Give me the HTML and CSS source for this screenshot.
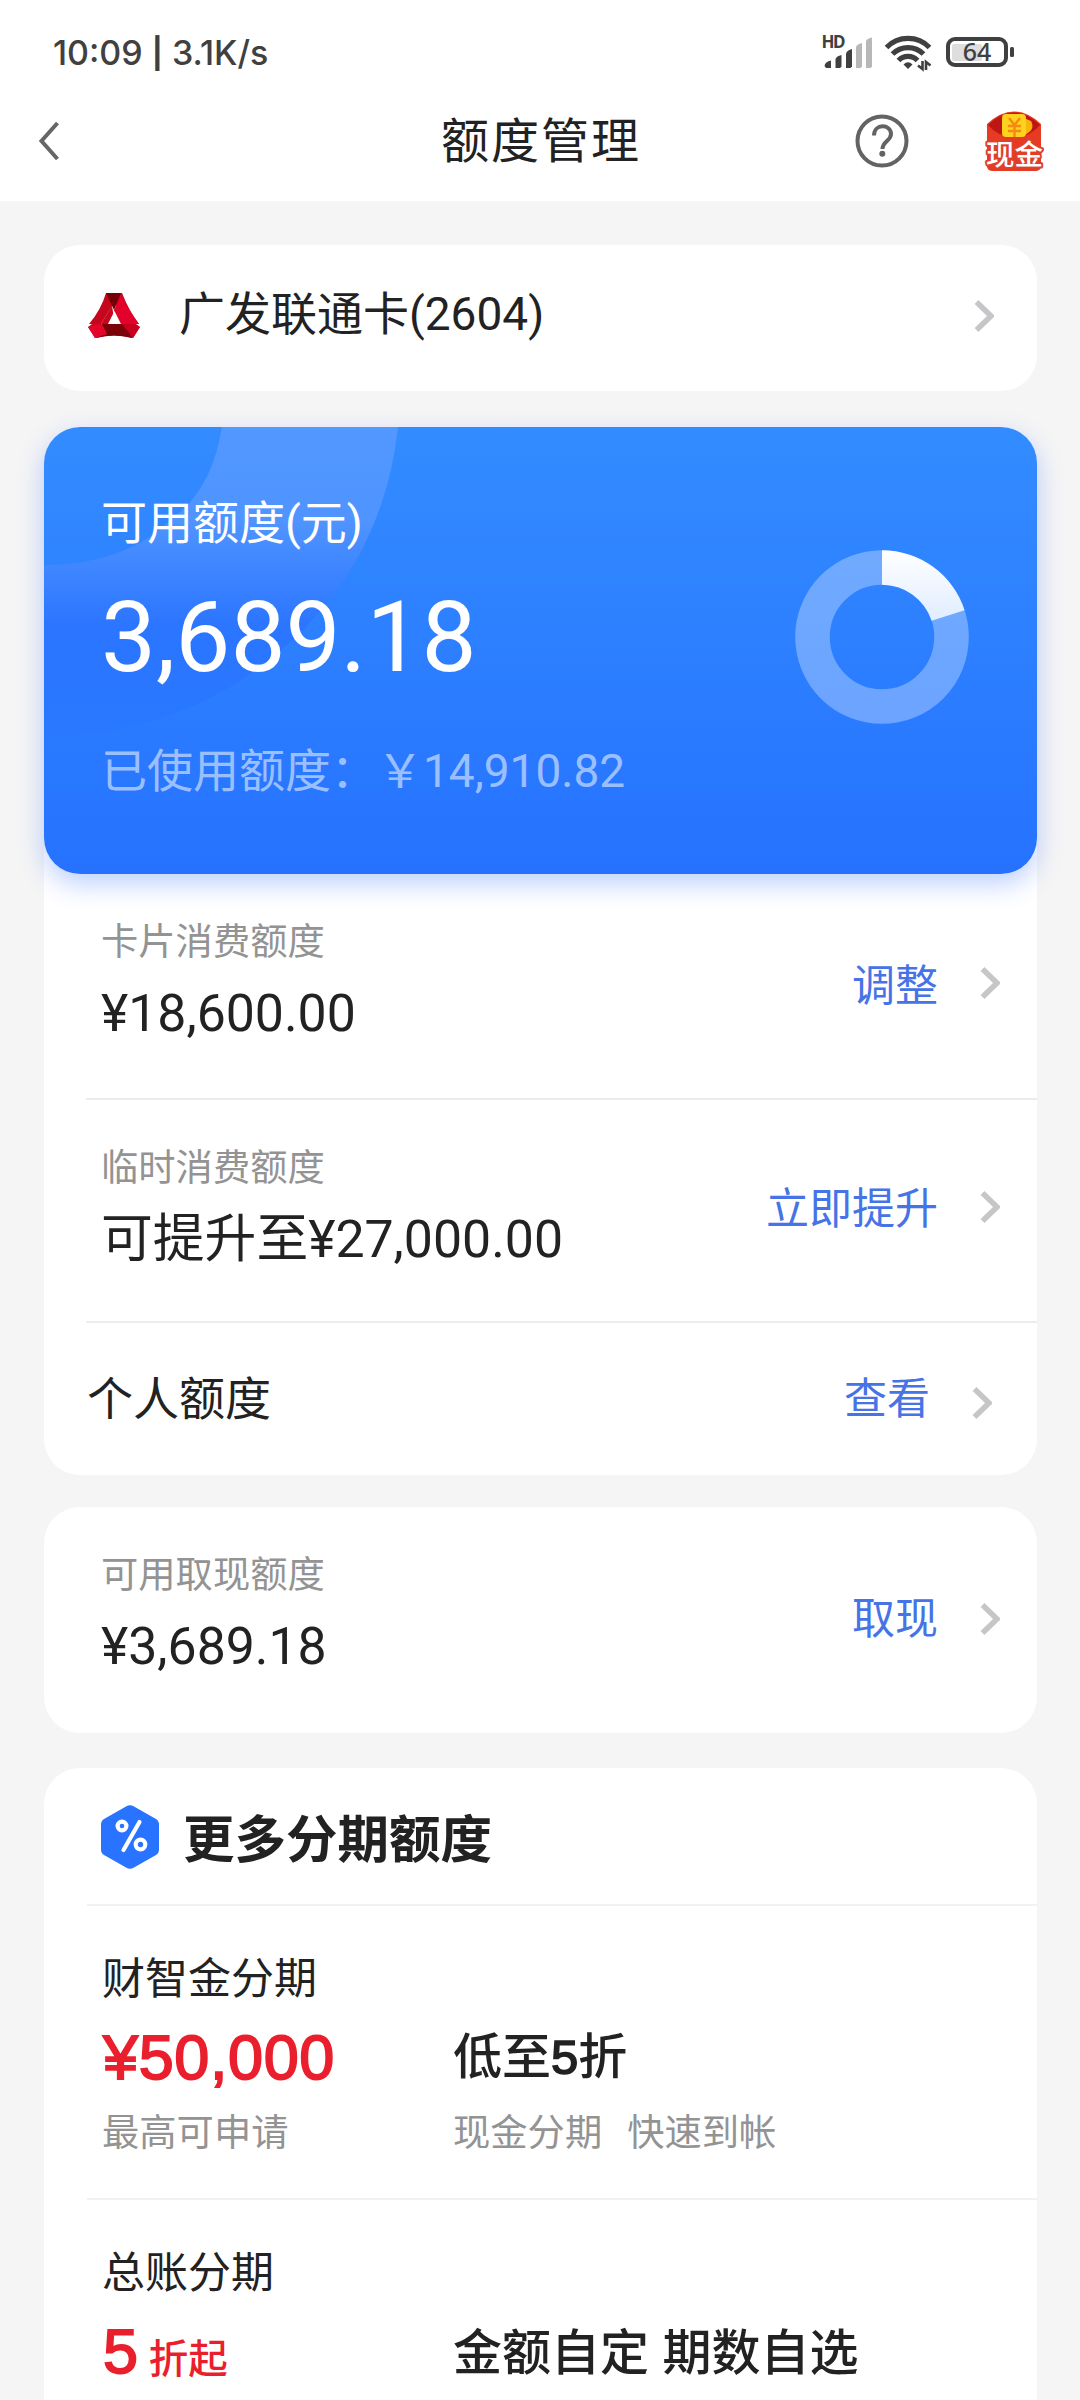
FILE: index.html
```html
<!DOCTYPE html>
<html lang="zh-CN">
<head>
<meta charset="utf-8">
<title>额度管理</title>
<link rel="stylesheet" href="styles.css">
</head>
<body>
<svg class="defs" width="0" height="0" aria-hidden="true">
  <symbol id="chevron" viewBox="0 0 20 34"><path d="M2.500 3 L17 17 L2.500 31" fill="none" stroke="#c6c6c8" stroke-width="5.500"/></symbol>
</svg>

<header class="top">
  <div class="status">
    <span class="status-text">10:09 <b>|</b> 3.1K/s</span>
    <svg class="status-icons" width="196" height="60" viewBox="820 22 196 60">
      <text class="hd" x="821.500" y="48" textLength="24">HD</text>
      <g fill="#404040">
        <path d="M824.500 66Q825 61.500 831 60.500V68H826Z"/>
        <path d="M835.500 68V59Q836.500 56 841.500 55V66.500L840 68Z"/>
        <path d="M846 68V53.500Q847 50 852 49V66.500L850.500 68Z"/>
      </g>
      <g fill="#b8b8b8">
        <path d="M856 68V47Q857 44 862 43V66.500L860.500 68Z"/>
        <path d="M866 68V41Q867 38.500 872 37.500V66.500L870.500 68Z"/>
      </g>
      <g fill="none" stroke="#404040" stroke-width="5.200">
        <path d="M886.500 47.500A30 30 0 0 1 929.500 47.500"/>
        <path d="M892.500 54A22 22 0 0 1 923.500 54"/>
        <path d="M898.500 60.500A13 13 0 0 1 917.500 60.500"/>
      </g>
      <path d="M908 69L903.500 64.500Q908 60 912.500 64.500Z" fill="#404040"/>
      <path d="M922.500 61V69L918 65.500M926 70V62L930.500 65.500" fill="none" stroke="#404040" stroke-width="2.600"/>
      <rect x="952" y="44" width="30" height="17" rx="2" fill="#dedede"/>
      <rect x="948" y="39" width="58" height="26" rx="7" fill="none" stroke="#404040" stroke-width="4"/>
      <rect x="1010" y="47" width="4" height="10" rx="1.500" fill="#404040"/>
      <text class="battery" x="977" y="60.500" text-anchor="middle">64</text>
    </svg>
  </div>
  <nav class="nav">
    <svg class="back" width="22" height="40" viewBox="0 0 22 40"><path d="M20.500 2L4.500 20L20.500 38" fill="none" stroke="#666" stroke-width="4"/></svg>
    <h1 class="nav-title">额度管理</h1>
    <svg class="help" width="54" height="54" viewBox="0 0 54 54">
      <circle cx="27" cy="27" r="24.500" fill="none" stroke="#636363" stroke-width="4"/>
      <path d="M19 21.500C19 9 36 10 36 20C36 27 27.500 27 27.500 35" fill="none" stroke="#636363" stroke-width="4"/>
      <circle cx="27.300" cy="39.800" r="3" fill="#636363"/>
    </svg>
    <svg class="cash" width="60" height="62" viewBox="0 0 60 62">
      <path d="M3 14Q30-11 57 14V56Q57 61 51 61H9Q3 61 3 56Z" fill="#e63a22"/>
      <path d="M4 15Q30-10 56 15Q46 27 30 27Q14 27 4 15Z" fill="#bd1613"/>
      <path d="M35 6L47 11Q52 20 40 25Z" fill="#f9b50b"/>
      <rect x="18" y="4" width="24" height="23" rx="4" fill="#ffd21d"/>
      <path d="M25 8L30.500 15L36 8M24 16H37M24 21H37M30.500 15V27" fill="none" stroke="#f38a13" stroke-width="2.400"/>
      <text class="cash-label" x="30.500" y="55" text-anchor="middle">现金</text>
    </svg>
  </nav>
</header>

<main class="content">
  <section class="card account">
    <svg class="logo" width="52" height="46" viewBox="0 0 52 46">
      <path d="M18 0H34Q41 18 51 31H39L26 10L13 31H1Q13 17 18 0Z" fill="#c5061d"/>
      <path d="M26 17L33 1Q41 18 51 31H35Z" fill="#e3002b"/>
      <path d="M18 0H33L26 17Z" fill="#760006"/>
      <path d="M24 13L13 31H27Z" fill="#c5061d"/>
      <path d="M26 16L39 31H27Z" fill="#e3002b"/>
      <path d="M0 34L4 31H48L52 34L45 45Q26 40 7 45Z" fill="#d20722"/>
      <path d="M14 31H38L44 45Q26 40 8 45Z" fill="#7c0007"/>
      <path d="M0 34L14 31L19 41L7 45Z" fill="#e3062a"/>
      <path d="M34 31H46L52 34L45 45Z" fill="#c9001d"/>
      <path d="M26.500 18L33 31H20Z" fill="#fff"/>
    </svg>
    <span class="account-name">广发联通卡(2604)</span>
    <svg class="chevron"><use href="#chevron"/></svg>
  </section>

  <section class="limits">
    <div class="hero">
      <svg class="hero-art" width="380" height="448" viewBox="0 0 380 448">
        <defs>
          <linearGradient id="ring" x1="0" y1="0" x2="0" y2="311" gradientUnits="userSpaceOnUse">
            <stop offset="0" stop-color="#5298ff"/><stop offset=".3" stop-color="#4f94ff"/><stop offset=".64" stop-color="#2b75ff"/><stop offset="1" stop-color="#2978ff"/>
          </linearGradient>
        </defs>
        <path d="M178 0Q168 62 130 90Q82 138 0 138V311Q150 305 245 216Q340 130 354 0Z" fill="url(#ring)"/>
      </svg>
      <div class="hero-text">
        <p class="hero-label">可用额度(元)</p>
        <p class="hero-value">3,689.18</p>
        <p class="hero-used">已使用额度：￥14,910.82</p>
      </div>
      <svg class="donut" width="174" height="174" viewBox="-87 -87 174 174">
        <defs><linearGradient id="slice" x1="0" y1="0" x2="0" y2="1"><stop offset="0" stop-color="#fff"/><stop offset="1" stop-color="#e0edff"/></linearGradient></defs>
        <circle r="69.500" fill="none" stroke="#fff" stroke-opacity=".31" stroke-width="34.600"/>
        <path d="M0-86.800A86.800 86.800 0 0 1 82.550-26.820L49.640-16.130A52.200 52.200 0 0 0 0-52.200Z" fill="url(#slice)"/>
      </svg>
    </div>
    <div class="row">
      <div class="row-main"><p class="label">卡片消费额度</p><p class="value">¥18,600.00</p></div>
      <a class="action">调整</a><svg class="chevron raised"><use href="#chevron"/></svg>
    </div>
    <div class="row">
      <div class="row-main"><p class="label">临时消费额度</p><p class="value">可提升至¥27,000.00</p></div>
      <a class="action action-raised">立即提升</a><svg class="chevron raised"><use href="#chevron"/></svg>
    </div>
    <div class="row row-single">
      <p class="single">个人额度</p>
      <a class="action">查看</a><svg class="chevron lowered"><use href="#chevron"/></svg>
    </div>
  </section>

  <section class="card withdraw">
    <div class="row">
      <div class="row-main"><p class="label">可用取现额度</p><p class="value">¥3,689.18</p></div>
      <a class="action">取现</a><svg class="chevron"><use href="#chevron"/></svg>
    </div>
  </section>

  <section class="card more">
    <div class="more-head">
      <svg width="58" height="64" viewBox="0 0 58 64">
        <path d="M25 1.500Q29-1 33 1.500L55 14Q58 16 58 19.500V44.500Q58 48 55 50L33 62.500Q29 65 25 62.500L3 50Q0 48 0 44.500V19.500Q0 16 3 14Z" fill="#2873ff"/>
        <g fill="none" stroke="#fff" stroke-width="4.200"><circle cx="21" cy="21" r="4.400"/><circle cx="39.500" cy="39.500" r="4.800"/><path d="M38.500 17L22.500 45" stroke-linecap="round"/></g>
      </svg>
      <h2 class="more-title">更多分期额度</h2>
    </div>
    <div class="plan">
      <h3 class="plan-name">财智金分期</h3>
      <p class="price">¥50,000</p>
      <p class="perk">低至<span class="digit">5</span>折</p>
      <p class="label">最高可申请</p>
      <p class="label tags"><span>现金分期</span><span>快速到帐</span></p>
    </div>
    <div class="plan">
      <h3 class="plan-name">总账分期</h3>
      <p class="price">5<span class="unit">折起</span></p>
      <p class="perk perk-raised">金额自定 期数自选</p>
    </div>
  </section>
</main>
</body>
</html>
```
FILE: styles.css
```css
* { box-sizing: border-box; margin: 0; padding: 0; }

body {
  width: 1080px;
  height: 2400px;
  overflow: hidden;
  background: #f5f5f5;
  color: #222;
  font-family: Roboto, "Noto Sans CJK SC", sans-serif;
}

h1, h2, h3 { font-weight: 400; }
svg { display: block; flex: none; }
.defs { position: absolute; }

.top { height: 201px; background: #fff; }
.status {
  display: flex;
  justify-content: space-between;
  height: 82px;
  padding: 22px 64px 0 53px;
}
.status-text {
  padding-top: 10px;
  font: 500 34px/42px Inter, sans-serif;
  color: #404040;
  white-space: nowrap;
}
.status-text b { font-size: 30px; vertical-align: 1px; }
.status-icons { overflow: visible; }
.hd { font: 700 17px "Noto Sans", sans-serif; fill: #404040; }
.battery { font: 500 25px "Noto Sans", sans-serif; fill: #404040; }

.nav {
  display: grid;
  grid-template-columns: 404px 414px 129px 60px;
  align-items: center;
  height: 119px;
  padding: 0 36px 1px 37px;
}
.nav-title { padding-top: 2px; font-size: 48px; letter-spacing: 2px; line-height: 60px; }
.cash-label {
  font: 500 28.500px "Noto Sans CJK SC", sans-serif;
  fill: #fff;
  stroke: #e0402a;
  stroke-width: 4px;
  stroke-linejoin: round;
  paint-order: stroke;
}

.content { padding: 44px 43px 0 44px; }
.card { background: #fff; border-radius: 36px; }
.chevron { width: 20px; height: 34px; }
.raised { margin-bottom: 7px; }
.lowered { margin-top: 9px; }

.account {
  display: flex;
  align-items: center;
  height: 146px;
  padding: 0 43px 4px 44px;
}
.account-name {
  flex: 1;
  margin-left: 39px;
  padding-bottom: 4px;
  font-size: 46px;
  line-height: 60px;
}

.limits {
  margin-top: 36px;
  border-radius: 36px;
  background: #fff;
}
.hero {
  position: relative;
  display: flex;
  justify-content: space-between;
  height: 447px;
  padding: 66px 68px 0 57px;
  border-radius: 36px;
  background: linear-gradient(#338cff, #2672ff);
  box-shadow: 0 10px 26px rgba(40, 100, 255, .3);
  color: #fff;
}
.hero-art { position: absolute; left: 0; top: 0; border-radius: 36px 0 0 0; }
.hero-text { position: relative; }
.hero-label, .hero-used { font-size: 46px; line-height: 60px; white-space: nowrap; }
.hero-value { margin-top: 30px; font-size: 98px; line-height: 110px; }
.hero-used { margin-top: 48px; color: rgba(255, 255, 255, .55); }
.donut { margin-top: 57px; }

.row {
  position: relative;
  display: flex;
  align-items: center;
  height: 226px;
  padding: 0 37px 2px 57px;
}
.limits .row:nth-child(3) { height: 223px; }
.limits .row:not(.row-single)::after {
  content: "";
  position: absolute;
  right: 0;
  bottom: 0;
  left: 42px;
  height: 2px;
  background: #ececec;
}
.limits .row-single { height: 152px; padding: 0 45px 1px 43px; }
.row-main { flex: 1; align-self: flex-start; padding-top: 43px; }
.single { flex: 1; font-size: 46px; line-height: 60px; }
.label { color: #939393; font-size: 37.300px; line-height: 50px; }
.value { margin-top: 17px; font-size: 51.800px; line-height: 60px; }
.action { margin-right: 42px; color: #4673e6; font-size: 43px; line-height: 60px; }
.action-raised { padding-bottom: 3px; }

.withdraw { margin-top: 32px; }

.more { height: 700px; margin-top: 35px; }
.more-head {
  display: flex;
  align-items: center;
  gap: 24px;
  height: 138px;
  margin-left: 43px;
  padding: 2px 0 0 14px;
  border-bottom: 2px solid #f2f2f2;
}
.more-title { padding-top: 7px; font-size: 51.500px; font-weight: 700; line-height: 60px; }

.plan {
  display: grid;
  grid-template-columns: 351px 1fr;
  align-items: center;
  align-content: start;
  height: 294px;
  margin-left: 43px;
  padding: 48px 0 37px 15px;
  border-bottom: 2px solid #f2f2f2;
}
.plan-name { grid-column: 1 / 3; margin-bottom: 18px; font-size: 43px; line-height: 50px; }
.plan .label { margin-top: 16px; }
.price {
  padding-left: 1px;
  color: #ea1f2d;
  font: 400 63px/70px "Liberation Sans", "Noto Sans CJK SC", sans-serif;
  letter-spacing: .6px;
  -webkit-text-stroke: 1.800px #ea1f2d;
}
.unit { margin-left: 10px; font-size: 39.500px; font-weight: 500; letter-spacing: 0; -webkit-text-stroke: 0; }
.perk { font: 500 49px/70px "Liberation Sans", "Noto Sans CJK SC", sans-serif; }
.perk-raised { padding-bottom: 4px; }
.digit { -webkit-text-stroke: 1.600px #222; }
.tags { display: flex; gap: 25px; }
```
